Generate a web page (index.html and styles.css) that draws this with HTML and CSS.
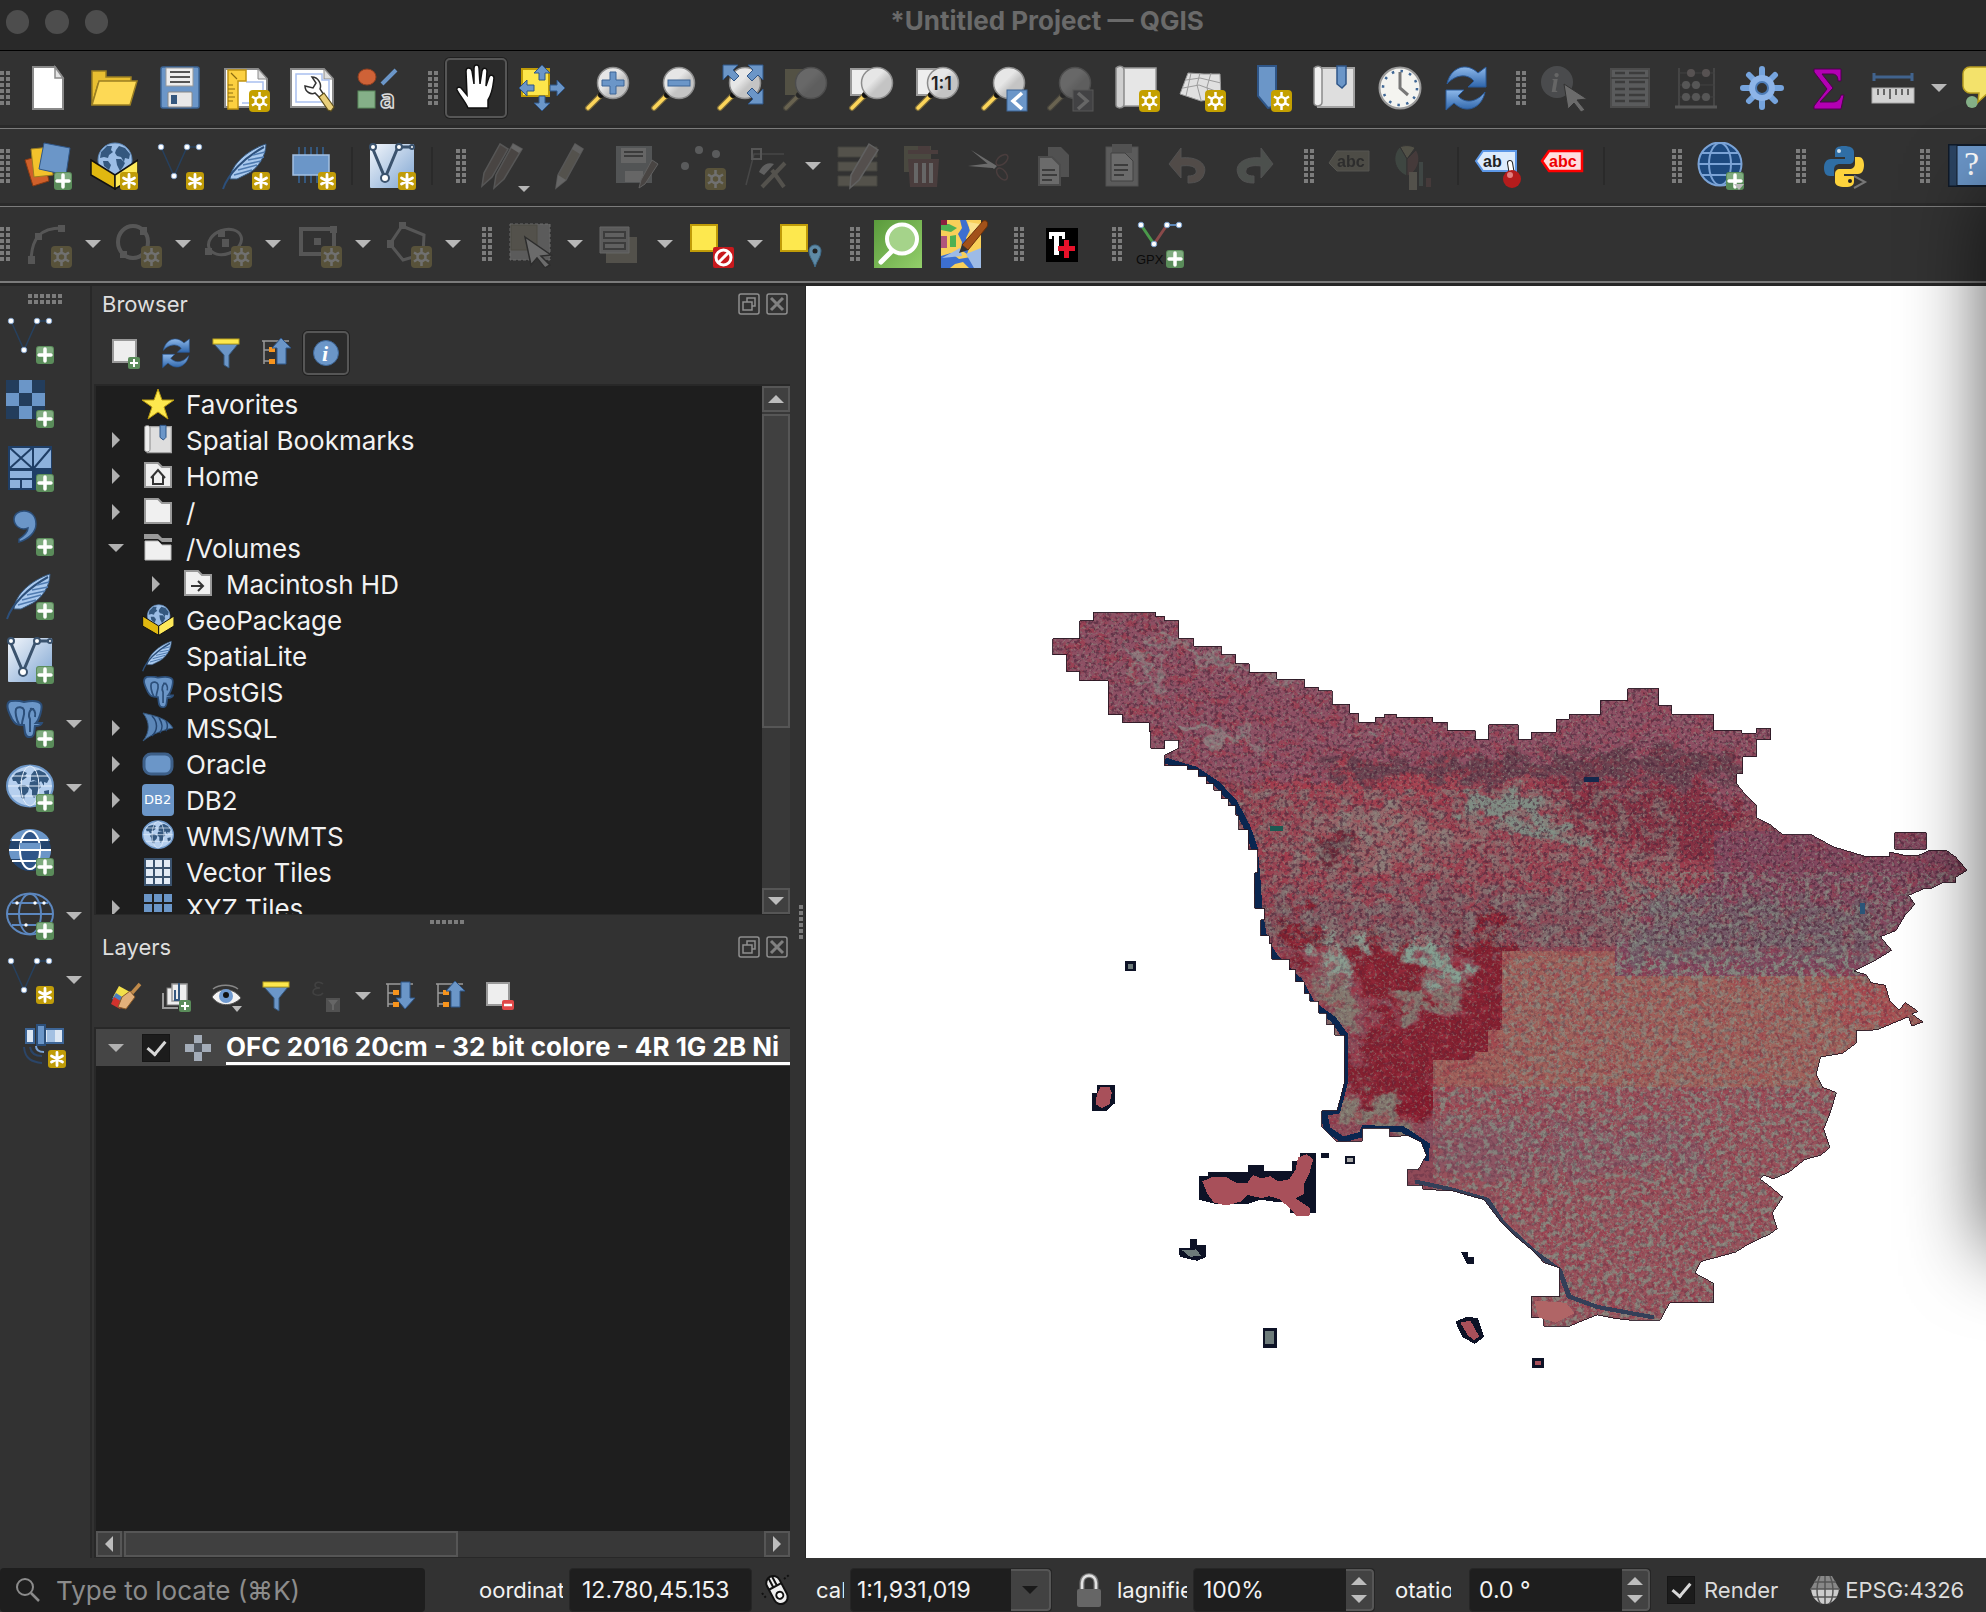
FILE: index.html
```html
<!DOCTYPE html>
<html lang="en">
    <head>
        <meta charset="utf-8" />
        <title>*Untitled Project — QGIS</title>
        <link rel="stylesheet" href="styles.css">
    </head>

    <body>

<svg class="paints" width="0" height="0" aria-hidden="true">
    <linearGradient id="glass" x1="0" y1="0" x2="1" y2="1"><stop offset="0.4" stop-color="#e6e6e6"/><stop offset="0.6" stop-color="#c4c4c4"/></linearGradient>
    <linearGradient id="sky" x1="0" y1="0" x2="1" y2="1"><stop offset="0" stop-color="#f2f6fb"/><stop offset="1" stop-color="#7fa5d2"/></linearGradient>
    <linearGradient id="blue" x1="0" y1="0" x2="0" y2="1"><stop offset="0" stop-color="#8db8ea"/><stop offset="1" stop-color="#2f66ab"/></linearGradient>
    <linearGradient id="green" x1="0" y1="0" x2="1" y2="1"><stop offset="0" stop-color="#5a9a3c"/><stop offset="1" stop-color="#93cf6a"/></linearGradient>
</svg>

<!-- icons -->
<svg class="sprite" aria-hidden="true">
    <symbol id="b-sun" viewBox="0 0 48 48"><rect x="27" y="26" width="21" height="22" rx="4" fill="#c4a000"/><path d="M37.500 28v18M30 32.500l15 9M45 32.500l-15 9" stroke="#fff" stroke-width="2.500"/><circle cx="37.500" cy="37" r="4" fill="#c4a000" stroke="#fff" stroke-width="2.500"/></symbol>
    <symbol id="b-star" viewBox="0 0 48 48"><rect x="30" y="30" width="18" height="18" rx="3" fill="#c09c08"/><path d="M39 32.500v13M33.500 36l11 6M44.500 36l-11 6" stroke="#fff" stroke-width="2.800" stroke-linecap="round"/></symbol>
    <symbol id="b-plus" viewBox="0 0 48 48"><rect x="30" y="30" width="18" height="18" rx="3" fill="#5a8c5a"/><rect x="31" y="31" width="16" height="7" rx="2" fill="#7fab7f"/><path d="M39 33v12M33 39h12" stroke="#fff" stroke-width="3.500" stroke-linecap="round"/></symbol>
    <symbol id="mag" viewBox="0 0 48 48"><path d="M4 44 17 31" stroke="#7a6a3a" stroke-width="6" stroke-linecap="round"/><path d="M4 44 15 33" stroke="#fcd55a" stroke-width="3.500" stroke-linecap="round"/><circle cx="17" cy="31" r="3" fill="#111"/><circle cx="29" cy="19" r="15.500" fill="url(#glass)" stroke="#8c8c8c" stroke-width="1.500"/></symbol>
    <symbol id="globe" viewBox="0 0 48 48"><ellipse cx="24" cy="22" rx="23" ry="20.500" fill="#b5cfee" stroke="#6d97c8" stroke-width="2"/><path d="M6 14l4-5 7-2 4 2-2 3 2 1-4 3-3 1 1 3-3 0-2-3-3 0zM14 21l5 0 4 3-1 4-3 3-1 5-3-3-1-6-2-3zM25 11l3-4 5-1 6 3 4 6-2 4-3-1 0 4-3-5-3 3-2-3-3-1-2 1zM24 18l5-1 4 2 2 4-3 3-1 5-3 3-2-3 0-5-3-3zM38 27l5-1 0 4-4 3z" fill="#34587f"/><path d="M2 22h44M6 12h36M6 32h36" stroke="#e4eefa" stroke-width="1" fill="none"/><ellipse cx="24" cy="22" rx="9" ry="20" fill="none" stroke="#e4eefa"/></symbol>

    <symbol id="i-new" viewBox="0 0 48 48"><path d="M9 3h22l8 11v31H9z" fill="#fff" stroke="#8a8a8a" stroke-width="2"/><path d="M31 3v11h8z" fill="#e4e4e4" stroke="#8a8a8a" stroke-width="1.500"/></symbol>
    <symbol id="i-open" viewBox="0 0 48 48"><path d="M2 7h14v6h25v7H8L2 41z" fill="#e9bf31" stroke="#9b7f22" stroke-width="1.500"/><path d="M9 17h38l-7 24H2z" fill="#fdd955" stroke="#9b7f22" stroke-width="1.500"/></symbol>
    <symbol id="i-save" viewBox="0 0 48 48"><rect x="5" y="3" width="38" height="41" rx="2" fill="#6b96c8" stroke="#3d6596" stroke-width="1.500"/><rect x="10" y="4" width="27" height="18" fill="#eee" stroke="#999"/><path d="M14 8h20M14 13h20M14 18h20" stroke="#555" stroke-width="2"/><rect x="12" y="28" width="24" height="15" rx="1" fill="#e8e8e8" stroke="#888"/><rect x="15" y="31" width="6" height="9" fill="#35587f"/></symbol>
    <symbol id="i-layout" viewBox="0 0 48 48"><path d="M3 5h33l9 10v28H3z" fill="#fff" stroke="#8a8a8a" stroke-width="2"/><path d="M36 5v10h9z" fill="#ddd" stroke="#8a8a8a"/><path d="M24 18h17v21H20" fill="none" stroke="#a9c0ef" stroke-width="1.500"/><path d="M6 6h18v11h-8v28H6z" fill="#fcd040" stroke="#c09412" stroke-width="1.500"/><path d="M6 21h5M6 25h7M6 29h5M6 33h7M6 37h5M9 9l6 6" stroke="#8b6c10" stroke-width="1.200"/><use href="#b-sun"/></symbol>
    <symbol id="i-manager" viewBox="0 0 48 48"><path d="M3 5h33l9 10v28H3z" fill="#fff" stroke="#8a8a8a" stroke-width="2"/><path d="M36 5v10h9z" fill="#ddd" stroke="#8a8a8a"/><path d="M8 10h26v6h7v22H8z" fill="none" stroke="#a9c0ef" stroke-width="1.500"/><path d="M17 22c0 6 6 9 10 7l5 5 4-3-4-6c2-5-2-12-8-12l4 6-3 5z" fill="#fff" stroke="#333" stroke-width="1.500"/><path d="M31 33l5-4 10 14-3 4-3-1z" fill="#e9cf7a" stroke="#5d4f1d" stroke-width="1.200"/></symbol>
    <symbol id="i-style" viewBox="0 0 48 48"><ellipse cx="13" cy="13" rx="9" ry="8" fill="#cf6237" stroke="#8f3f20"/><path d="M28 20 42 6" stroke="#6b96c8" stroke-width="4"/><rect x="4" y="27" width="17" height="17" fill="#85b088" stroke="#5b8a5d"/><text x="26" y="44" class="t-a">a</text></symbol>
    <symbol id="i-hand" viewBox="0 0 48 48"><path d="M16 44c-3-7-8-12-11-18-1-3 3-4 5-1l5 6L14 7c0-4 5-4 6 0l2 13 0-16c0-4 5-4 5 0l1 16 2-13c1-4 5-3 5 0l-1 15 3-9c1-3 5-2 5 1-1 7-1 14-6 22l0 8z" fill="#fff" stroke="#111" stroke-width="1.500"/></symbol>
    <symbol id="i-pansel" viewBox="0 0 48 48"><rect x="4" y="5" width="27" height="27" fill="#fde64b" stroke="#c09c08" stroke-width="2"/><g fill="#6b96c8" stroke="#2f5688"><path d="M24 1l8 8h-5v7h-6V9h-5zM24 47l-8-8h5v-7h6v7h5zM1 24l8-8v5h7v6H9v5zM47 24l-8-8v5h-7v6h7v5z"/></g></symbol>
    <symbol id="i-zoomin" viewBox="0 0 48 48"><use href="#mag"/><path d="M26 8h6v8h8v6h-8v8h-6v-8h-8v-6h8z" fill="#6b96c8" stroke="#3d6596"/></symbol>
    <symbol id="i-zoomout" viewBox="0 0 48 48"><use href="#mag"/><rect x="18" y="16" width="22" height="6" fill="#6b96c8" stroke="#3d6596"/></symbol>
    <symbol id="i-zoomfull" viewBox="0 0 48 48"><use href="#mag"/><g fill="#6b96c8" stroke="#2f5688"><path d="M7 1h15l-5 5 6 6-5 5-6-6-5 5zM47 1v15l-5-5-6 6-5-5 6-6-5-5zM47 40H32l5-5-6-6 5-5 6 6 5-5z"/></g></symbol>
    <symbol id="i-zoomsel" viewBox="0 0 48 48"><rect x="3" y="5" width="22" height="26" fill="#a89a48"/><use href="#mag"/></symbol>
    <symbol id="i-zoomlayer" viewBox="0 0 48 48"><rect x="3" y="5" width="22" height="26" fill="#eee" stroke="#999" stroke-width="2"/><use href="#mag"/></symbol>
    <symbol id="i-zoomnative" viewBox="0 0 48 48"><rect x="3" y="5" width="22" height="26" fill="#eee" stroke="#999" stroke-width="2"/><use href="#mag"/><text x="17" y="26" class="t-11">1:1</text></symbol>
    <symbol id="i-zoomlast" viewBox="0 0 48 48"><use href="#mag"/><rect x="27" y="26" width="20" height="21" fill="#6b96c8" stroke="#3d6596"/><path d="M42 29l-9 8 9 8" fill="none" stroke="#fff" stroke-width="3.500"/></symbol>
    <symbol id="i-zoomnext" viewBox="0 0 48 48"><use href="#mag"/><rect x="27" y="26" width="20" height="21" fill="#667" stroke="#aaa"/><path d="M32 29l9 8-9 8" fill="none" stroke="#ddd" stroke-width="3.500"/></symbol>
    <symbol id="i-mapview" viewBox="0 0 48 48"><path d="M8 4h36v38H8z" fill="#e6e6e6" stroke="#999" stroke-width="1.500"/><path d="M4 4c3-3 8-2 8 2v34c0 5-8 5-8 1z" fill="#cfcfcf" stroke="#8a8a8a" stroke-width="1.500"/><use href="#b-sun"/></symbol>
    <symbol id="i-3d" viewBox="0 0 48 48"><path d="M10 9l16 1 16 0 1 24-20 3L2 30z" fill="#e0e0e0" stroke="#999"/><path d="M8 16l14-2 21 5M5 24l16-3 22 8M22 9l-3 12 4 15M33 9l-4 14 2 12M13 9l-3 14-2 9" stroke="#9c9c9c" fill="none"/><use href="#b-sun"/></symbol>
    <symbol id="i-bookmarknew" viewBox="0 0 48 48"><path d="M14 2h18v40l-8 2-10-12z" fill="#6b96c8" stroke="#2f5688" stroke-width="2"/><use href="#b-sun"/></symbol>
    <symbol id="i-bookmarks" viewBox="0 0 48 48"><path d="M8 4h36v39H8z" fill="#dedede" stroke="#a2a2a2" stroke-width="2"/><path d="M4 4c3-3 8-2 8 2v32c0 5-8 5-8 1z" fill="#efefef" stroke="#8a8a8a" stroke-width="1.500"/><path d="M27 2h9v18l-4 4-5-4z" fill="#6b96c8" stroke="#2f5688" stroke-width="1.500"/></symbol>
    <symbol id="i-clock" viewBox="0 0 48 48"><circle cx="24" cy="24" r="20.500" fill="#f4f4f0" stroke="#9a9a9a" stroke-width="2"/><circle cx="24" cy="24" r="17" fill="none" stroke="#3f6796" stroke-width="2.500" stroke-dasharray="2.500 6.400"/><path d="M24 8v16l8 7" fill="none" stroke="#777" stroke-width="3"/></symbol>
    <symbol id="i-refresh" viewBox="0 0 48 48"><path d="M5 20C8 4 24-3 36 9l8-6v20H26l6-6C24 8 12 12 5 20z" fill="url(#blue)" stroke="#2a5a99"/><path d="M43 28C40 44 24 51 12 39l-8 7V26h18l-6 6c8 9 20 5 27-4z" fill="url(#blue)" stroke="#2a5a99"/></symbol>

    <symbol id="i-identify" viewBox="0 0 48 48"><circle cx="17" cy="18" r="16" fill="#7d8791"/><text x="11" y="28" class="t-i">i</text><path d="M24 20l23 15-10 1 8 10-4 2-7-9-6 6z" fill="#eee" stroke="#333"/></symbol>
    <symbol id="i-table" viewBox="0 0 48 48"><rect x="5" y="5" width="38" height="38" fill="#b5babf" stroke="#888" stroke-width="2"/><path d="M9 9h10M23 9h16M9 18h10M23 18h16M9 25h10M23 25h16M9 31h10M23 31h16M9 37h10M23 37h16" stroke="#555" stroke-width="2.500"/><path d="M5 14h38" stroke="#666" stroke-width="2"/></symbol>
    <symbol id="i-abacus" viewBox="0 0 48 48"><path d="M7 4v39M42 4v39" stroke="#888" stroke-width="1.500"/><path d="M3 43h42" stroke="#aaa" stroke-width="3"/><path d="M7 9h36M7 21h36M7 33h36" stroke="#666"/><g fill="#b99"><circle cx="19" cy="9" r="4"/><circle cx="34" cy="9" r="4"/></g><g fill="#ababab"><circle cx="14" cy="21" r="4"/><circle cx="24" cy="21" r="4"/><circle cx="14" cy="33" r="4"/><circle cx="24" cy="33" r="4"/><circle cx="34" cy="33" r="4"/></g></symbol>
    <symbol id="i-gear" viewBox="0 0 48 48"><g stroke="#76a4dd" stroke-width="6" stroke-linecap="round"><path d="M24 5v38M5 24h38M11 11l26 26M37 11 11 37"/></g><circle cx="24" cy="24" r="13" fill="#8db4e8"/><circle cx="24" cy="24" r="6" fill="#323232" stroke="#4d7bb5" stroke-width="2"/></symbol>
    <symbol id="i-sum" viewBox="0 0 48 48"><path d="M10 5h27v12h-3c0-5-2-7-6-7H18l11 14-13 14h13c5 0 7-3 8-7h3l-3 14H10v-3l13-17L10 8z" fill="#b300b3" stroke="#4d004d"/></symbol>
    <symbol id="i-measure" viewBox="0 0 48 48"><path d="M4 13h38M4 9v8M42 9v8" stroke="#41638d" stroke-width="3" fill="none"/><rect x="2" y="24" width="42" height="15" fill="#d3d3d3" stroke="#aaa"/><path d="M8 25v6M14 25v6M20 25v10M26 25v6M32 25v6M38 25v6" stroke="#444" stroke-width="1.500"/></symbol>
    <symbol id="i-tip" viewBox="0 0 48 48"><circle cx="12" cy="38" r="6" fill="#85b088"/><path d="M10 3h34v26H28l-10 9 1-9h-9c-3 0-7-3-7-7V10c0-4 3-7 7-7z" fill="#f3e26b" stroke="#b89d20" stroke-width="1.500"/></symbol>

    <symbol id="i-datasource" viewBox="0 0 48 48"><path d="M1 18l18-5 6 26-16 5z" fill="#d0602a" stroke="#8a3a12"/><path d="M7 7l20-2 2 28-19 2z" fill="#f3c22c" stroke="#9b7f22"/><path d="M20 1l26 5-4 27-27-6z" fill="#6b96c8" stroke="#2f5688"/><use href="#b-plus"/></symbol>
    <symbol id="i-gpkg" viewBox="0 0 48 48"><circle cx="25" cy="18" r="17" fill="#9bbde5" stroke="#5c87b8"/><path d="M11 10l6-6 5 0-1 4 2 2-4 3-1 3-4-1-4 1zM13 19l5 0 3 4-2 5-5-4zM26 8l3-4 6 2 5 6-1 5-4-1-1 4-3-5-4-1-2-3zM26 17l5 0 4 4-2 4-3 4-3-6z" fill="#34587f"/><path d="M1 18l24 15v14L1 33z" fill="#e0b810" stroke="#111" stroke-width="1.500"/><path d="M48 18 25 33v14l23-14z" fill="#fde95a" stroke="#111" stroke-width="1.500"/></symbol>
    <symbol id="i-gpkgnew" viewBox="0 0 48 48"><use href="#i-gpkg"/><use href="#b-star"/></symbol>
    <symbol id="vee" viewBox="0 0 48 48"><path d="M5 5l13 29L31 5h12" fill="none" stroke="#26405e" stroke-width="1.500"/><g fill="#fff" stroke="#7ba0cc" stroke-width=".8"><circle cx="5" cy="5" r="2.800"/><circle cx="18" cy="34" r="2.800"/><circle cx="31" cy="5" r="2.800"/><circle cx="43" cy="5" r="2.800"/></g></symbol>
    <symbol id="i-shp" viewBox="0 0 48 48"><use href="#vee"/><use href="#b-star"/></symbol>
    <symbol id="i-vecadd" viewBox="0 0 48 48"><use href="#vee"/><use href="#b-plus"/></symbol>
    <symbol id="feather" viewBox="0 0 48 48"><path d="M8 37C9 22 26 8 44 2c0 12-8 24-17 29l-12 6z" fill="#a9c9ee" stroke="#35587f"/><path d="M1 47C6 32 22 16 42 5" fill="none" stroke="#2c4f7a" stroke-width="2"/><path d="M12 33l18-5M16 28l19-5M21 23l18-4M26 18l16-3M31 13l12-3" stroke="#4f7bb0" stroke-width="1.500"/></symbol>
    <symbol id="i-splnew" viewBox="0 0 48 48"><use href="#feather"/><use href="#b-star"/></symbol>
    <symbol id="i-spladd" viewBox="0 0 48 48"><use href="#feather"/><use href="#b-plus"/></symbol>
    <symbol id="i-memory" viewBox="0 0 48 48"><path d="M11 5v36M17 5v36M23 5v36M29 5v36M35 5v36" stroke="#34587f" stroke-width="2"/><rect x="5" y="13" width="36" height="20" fill="#6b96c8" stroke="#a3c0e2" stroke-width="1.500"/></symbol>
    <symbol id="i-memnew" viewBox="0 0 48 48"><use href="#i-memory"/><use href="#b-star"/></symbol>
    <symbol id="mesh" viewBox="0 0 48 48"><rect x="2" y="2" width="44" height="44" rx="1" fill="url(#sky)"/><path d="M4 5l13 31L30 5h14" fill="none" stroke="#3b536e" stroke-width="3"/><g fill="#fff" stroke="#3b536e" stroke-width="2"><circle cx="5" cy="5" r="3"/><circle cx="17" cy="36" r="4"/><circle cx="31" cy="5" r="3"/><circle cx="44" cy="5" r="2"/></g></symbol>
    <symbol id="i-virtnew" viewBox="0 0 48 48"><use href="#mesh"/><use href="#b-star"/></symbol>
    <symbol id="i-virtadd" viewBox="0 0 48 48"><use href="#mesh"/><use href="#b-plus"/></symbol>
    <symbol id="pencil" viewBox="0 0 48 48"><path d="M29 2l8 5-17 31-10 8 2-13z" fill="#a89c7c" stroke="#aaa" stroke-width="1.500"/><path d="M29 2l8 5-3 5-8-5z" fill="#ccc"/><path d="M12 33l8 5-10 8z" fill="#ddd"/></symbol>
    <symbol id="i-pencils" viewBox="0 0 48 48"><path d="M20 2l8 5-16 28-10 9 2-13z" fill="#8c6f60" stroke="#aaa" stroke-width="1.500"/><path d="M33 2l9 5-18 30-10 9 2-13z" fill="#8c6f60" stroke="#aaa" stroke-width="1.500"/><path d="M33 2l9 5-3 4-8-5z" fill="#ddd"/></symbol>
    <symbol id="i-saveedit" viewBox="0 0 48 48"><rect x="4" y="4" width="36" height="37" fill="#9aa3ad"/><rect x="9" y="6" width="25" height="15" fill="#ddd"/><path d="M12 10h19M12 14h19" stroke="#555" stroke-width="2"/><rect x="13" y="29" width="18" height="11" fill="#ddd"/><path d="M40 18l6 4-13 20-6 4 2-8z" fill="#8c6f60" stroke="#ccc"/></symbol>
    <symbol id="i-points" viewBox="0 0 48 48"><g fill="#b5babf"><circle cx="21" cy="8" r="4"/><circle cx="38" cy="12" r="4"/><circle cx="7" cy="24" r="4"/></g><use href="#b-sun"/></symbol>
    <symbol id="i-vertex" viewBox="0 0 48 48"><path d="M2 43l8-31h30" stroke="#777" stroke-width="1.500" fill="none"/><rect x="8" y="7" width="9" height="10" fill="none" stroke="#aaa" stroke-width="2"/><path d="M41 21 18 45M28 28l12 17" stroke="#a89c7c" stroke-width="4"/><path d="M15 30c4-8 9-10 15-8l-10 11z" fill="#ccc"/></symbol>
    <symbol id="i-modify" viewBox="0 0 48 48"><path d="M4 5h39v10H4zM4 20h39v9H4zM4 34h39v10H4z" fill="#a89e70" stroke="#77704e"/><path d="M35 2l9 6-19 30-9 8 1-13z" fill="#b09080" stroke="#ccc" stroke-width="1.500"/></symbol>
    <symbol id="i-trash" viewBox="0 0 48 48"><rect x="4" y="4" width="27" height="26" fill="#8a7f48"/><path d="M8 10h30M18 6h12" stroke="#a05050" stroke-width="4"/><path d="M8 17h31l-2 28H10z" fill="#a05050"/><path d="M16 21v20M24 21v20M31 21v20" stroke="#ddd" stroke-width="4"/></symbol>
    <symbol id="i-cut" viewBox="0 0 48 48"><path d="M2 24l24-3 4 3-4 2zM5 8l26 16-3 3z" fill="#eee"/><g fill="none" stroke="#a05050" stroke-width="1.500"><ellipse cx="36" cy="18" rx="7" ry="4" transform="rotate(-40 36 18)"/><ellipse cx="36" cy="32" rx="7" ry="4" transform="rotate(50 36 32)"/></g></symbol>
    <symbol id="i-copy" viewBox="0 0 48 48"><path d="M16 5h13l8 8v22H16z" fill="#999"/><path d="M7 15h13l8 8v20H7z" fill="#eee" stroke="#888" stroke-width="2"/><path d="M10 28h13M10 33h15M10 38h10" stroke="#555" stroke-width="2"/></symbol>
    <symbol id="i-paste" viewBox="0 0 48 48"><rect x="8" y="5" width="32" height="39" fill="#bbb" stroke="#999"/><rect x="14" y="2" width="20" height="9" fill="#999"/><path d="M13 11h14l8 8v20H13z" fill="#eee" stroke="#666"/><path d="M16 23h14M16 28h14M16 33h10" stroke="#555" stroke-width="2"/></symbol>
    <symbol id="i-undo" viewBox="0 0 48 48"><path d="M5 22 17 6v10c16-2 27 6 23 16-2 7-8 9-16 9v-7c7 0 9-3 8-6-1-4-7-5-15-4v12z" fill="#a98270" stroke="#999"/></symbol>
    <symbol id="i-redo" viewBox="0 0 48 48"><path d="M43 22 31 6v10C15 14 4 22 8 32c2 7 8 9 16 9v-7c-7 0-9-3-8-6 1-4 7-5 15-4v12z" fill="#809889" stroke="#999"/></symbol>
    <symbol id="i-label" viewBox="0 0 48 48"><path d="M1 21 9 9h32v20H9z" fill="#8f8a62" stroke="#aaa58a"/><text x="9" y="25" class="t-abc">abc</text></symbol>
    <symbol id="i-diagram" viewBox="0 0 48 48"><g stroke="#333"><path d="M13 17 6 5C10 3 18 3 21 6z" fill="#a59a58"/><path d="M13 17 6 5c-9 8-6 24 7 29z" fill="#4b7a5d"/><path d="M13 17l9-9c6 8 2 22-9 26z" fill="#8c4848"/></g><path d="M15 30h8v18h-8z" fill="#a59a70"/><path d="M25 20h4v24h-4z" fill="#4b7a6d"/><path d="M32 36h5v9h-5z" fill="#8c4848"/></symbol>
    <symbol id="i-pin" viewBox="0 0 48 48"><path d="M2 19 9 9h33v20H9z" fill="#dcebfc" stroke="#5c97e6" stroke-width="2"/><text x="9" y="25" class="t-abc">ab</text><path d="M36 21l2 12" stroke="#222" stroke-width="6" stroke-linecap="round"/><path d="M36 21l2 12" stroke="#fff" stroke-width="4" stroke-linecap="round"/><circle cx="38" cy="37" r="9" fill="#b41c1c"/><circle cx="36" cy="33" r="3" fill="#e38080"/></symbol>
    <symbol id="i-redlabel" viewBox="0 0 48 48"><path d="M2 19 9 9h33v20H9z" fill="#ffdede" stroke="#f00" stroke-width="2.500"/><text x="9" y="25" class="t-red">abc</text></symbol>
    <symbol id="i-wwwadd" viewBox="0 0 48 48"><g fill="none" stroke="#7ba3d6" stroke-width="2"><circle cx="24" cy="22" r="21.500" fill="#1d4a80"/><ellipse cx="24" cy="22" rx="11" ry="21"/><path d="M2 22h44M6 11h36M6 33h36"/></g><use href="#b-plus"/><path d="M38 42h10l-5 6z" fill="#bbb"/></symbol>
    <symbol id="i-python" viewBox="0 0 48 48"><path d="M24 4c-7 0-9 2-9 6v5h10v2H11c-5 0-7 4-7 9s2 8 6 8h4v-6c0-4 2-6 6-6h9c3 0 5-2 5-5v-7c0-4-4-6-10-6z" fill="#2f6ea5"/><path d="M25 45c7 0 9-2 9-6v-5H24v-2h14c4 0 6-4 6-9s-2-8-5-8h-4v6c0 4-2 6-6 6h-9c-3 0-5 2-5 5v8c0 3 4 5 10 5z" fill="#fdd33c"/><circle cx="19" cy="9" r="2" fill="#cfe0ee"/><circle cx="30" cy="39" r="2" fill="#222"/><path d="M34 34l11 6-11 6" fill="none" stroke="#777" stroke-width="2"/></symbol>
    <symbol id="i-help" viewBox="0 0 48 48"><rect x="5" y="3" width="50" height="41" fill="#6b96c8" stroke="#111b29" stroke-width="2"/><rect x="5" y="3" width="8" height="41" fill="#2a4361" stroke="#111b29"/><text x="20" y="33" class="t-q">?</text></symbol>

    <symbol id="i-curve" viewBox="0 0 48 48"><path d="M7 40C8 18 16 8 38 8" fill="none" stroke="#aaa" stroke-width="3"/><path d="M4 36h7v8H4zM11 13h7v7h-7zM34 5h7v7h-7z" fill="#aaa"/><use href="#b-sun"/></symbol>
    <symbol id="i-circle" viewBox="0 0 48 48"><ellipse cx="19" cy="22" rx="15" ry="16" fill="none" stroke="#aaa" stroke-width="4"/><path d="M26 7h7v8h-7zM6 31h7v7H6z" fill="#aaa"/><use href="#b-sun"/></symbol>
    <symbol id="i-ellipse" viewBox="0 0 48 48"><ellipse cx="21" cy="22" rx="17" ry="12" transform="rotate(-20 21 22)" fill="none" stroke="#aaa" stroke-width="3"/><path d="M1 28h7v7H1zM14 10h7v7h-7zM18 19h7v8h-7z" fill="#aaa"/><use href="#b-sun"/></symbol>
    <symbol id="i-rect" viewBox="0 0 48 48"><path d="M7 9h33v25H7z" fill="none" stroke="#aaa" stroke-width="4"/><path d="M36 6h7v7h-7zM20 18h7v7h-7z" fill="#aaa"/><use href="#b-sun"/></symbol>
    <symbol id="i-polygon" viewBox="0 0 48 48"><path d="M18 6l22 9-1 19-20 6L6 24z" fill="none" stroke="#aaa" stroke-width="3"/><path d="M15 2h7v7h-7zM3 20h7v8H3z" fill="#aaa"/><use href="#b-sun"/></symbol>
    <symbol id="i-select" viewBox="0 0 48 48"><rect x="4" y="4" width="40" height="36" fill="#bbb" stroke="#eee" stroke-dasharray="3 2"/><rect x="5" y="5" width="26" height="25" fill="#a59a70" stroke="#8a7f50"/><path d="M19 17l26 18-10 1 9 9-5 3-8-10-6 7z" fill="#eee" stroke="#222" stroke-width="1.500"/></symbol>
    <symbol id="i-selvalue" viewBox="0 0 48 48"><path d="M10 17h31v26H10z" fill="#a59a70"/><path d="M4 7h29v26H4z" fill="#bbb" stroke="#ddd"/><path d="M8 12h21v6H8zM8 23h21v6H8z" fill="#ccc" stroke="#555" stroke-width="2"/></symbol>
    <symbol id="i-deselect" viewBox="0 0 48 48"><rect x="5" y="5" width="26" height="26" fill="#fde84e" stroke="#c09c08" stroke-width="2"/><rect x="27" y="27" width="21" height="21" rx="2" fill="#c8191d"/><circle cx="37.500" cy="37.500" r="7.500" fill="none" stroke="#fff" stroke-width="3"/><path d="M32 43l11-11" stroke="#fff" stroke-width="3"/></symbol>
    <symbol id="i-selloc" viewBox="0 0 48 48"><rect x="5" y="5" width="26" height="26" fill="#fde84e" stroke="#c09c08" stroke-width="2"/><path d="M39 47c-2-7-6-10-6-16 0-8 12-8 12 0 0 6-4 9-6 16z" fill="#5e8aa6" stroke="#3f6a88"/><circle cx="39" cy="31" r="2.500" fill="#222"/></symbol>
    <symbol id="i-search" viewBox="0 0 48 48"><rect width="48" height="48" fill="url(#green)"/><path d="M17 32 7 42" stroke="#fff" stroke-width="5" stroke-linecap="round"/><ellipse cx="28" cy="19" rx="15" ry="14.500" fill="#a5d38a" stroke="#fff" stroke-width="4"/></symbol>
    <symbol id="i-osm" viewBox="0 0 48 48"><rect x="1" width="40" height="48" fill="#f8cf59"/><path d="M20 0h6l4 10-4 8 4 8-3 8-6-4 1-8-4-8 4-6zM1 36l10-3 8 6 12-2 4 11h-6l-6-6-8 2-5 4H1z" fill="#3c6fd0"/><path d="M1 4h8l8 4-6 4-10-2z" fill="#4eb052"/><path d="M1 0h6v5H1z" fill="#8a2040"/><path d="M1 16h6v12H1z" fill="#b0547c"/><path d="M10 16l6-1v12h-6z" fill="#4eb052"/><path d="M28 2l12 2v8l-8 8z" fill="#fbe28c"/><path d="M2 38l18-10 2 8M26 34l8 14h7V28z" fill="#9dbbe6"/><path d="M43 1c5-2 6 4 3 7L28 30l-6-5z" fill="#a2521a" stroke="#6b3109"/><path d="M22 25l6 5-9 3z" fill="#333"/></symbol>
    <symbol id="i-tplus" viewBox="0 0 48 48"><rect x="8" y="8" width="32" height="34" fill="#000"/><path d="M11 12h16v7h-3v-3h-3v19h-5V16h-2v3h-3z" fill="#fff"/><path d="M26 20h5v6h6v5h-6v7h-5v-7h-6v-5h6z" fill="#e8112a"/></symbol>
    <symbol id="i-gpx" viewBox="0 0 48 48"><path d="M5 5l13 19" stroke="#4b9a4b" stroke-width="3"/><path d="M18 24 31 5" stroke="#8a4a4a" stroke-width="3"/><path d="M31 5h12" stroke="#5c87b8" stroke-width="2"/><g fill="#fff" stroke="#7ba0cc"><circle cx="5" cy="5" r="2.800"/><circle cx="18" cy="24" r="2.800"/><circle cx="31" cy="5" r="2.800"/><circle cx="43" cy="5" r="2.800"/></g><text x="0" y="44" class="t-gpx">GPX</text><use href="#b-plus"/></symbol>

    <symbol id="i-raster" viewBox="0 0 48 48"><rect y="0" width="39" height="39" fill="#233d5c"/><path d="M13 0h13v13H13zM0 13h13v13H0zM26 13h13v13H26zM13 26h13v13H13z" fill="#6b96c8"/><use href="#b-plus"/></symbol>
    <symbol id="i-meshadd" viewBox="0 0 48 48"><rect x="2" y="2" width="44" height="44" fill="#1f3e66"/><path d="M4 4h22v20H4zM28 4h17v20H28zM4 27h22v7H4zM4 36h10v8H4zM16 36h10v8H16z" fill="#8db1dc"/><path d="M4 4l22 20M26 4 4 24M45 4 28 24" stroke="#1f3e66" stroke-width="2"/><use href="#b-plus"/></symbol>
    <symbol id="i-comma" viewBox="0 0 48 48"><path d="M18 3c8 0 12 6 12 13 0 8-7 15-17 18v-3c6-4 9-8 9-11-7 3-14-2-14-9 0-5 5-8 10-8z" fill="#6b96c8" stroke="#2c4f7a" stroke-width="1.500"/><use href="#b-plus"/></symbol>
    <symbol id="elephant" viewBox="0 0 48 48"><path d="M5 1c7-1 10 0 13 1 5-1 14-2 17 2 2 4-2 16-5 19l6 0c-1 3-4 3-7 3-1 5 0 12-6 11-5 0-4-7-5-12-8 0-9-1-12-6C3 13-2 3 5 1z" fill="#6b96c8" stroke="#2c4f7a" stroke-width="2"/><path d="M13 24c-3-5-4-12-3-15 2-3 7-2 8 1 1 6-2 9-2 14M24 9c4-1 6 3 5 8M28 9c-5-1-6 7-4 10v13" fill="none" stroke="#2c4f7a" stroke-width="2"/></symbol>
    <symbol id="i-pgadd" viewBox="0 0 48 48"><use href="#elephant"/><use href="#b-plus"/></symbol>
    <symbol id="i-wmsadd" viewBox="0 0 48 48"><use href="#globe"/><use href="#b-plus"/></symbol>
    <symbol id="i-wcsadd" viewBox="0 0 48 48"><circle cx="24" cy="22" r="21" fill="#24456f"/><path d="M4 13C10-3 38-3 44 13zM3 22h42c0 4-1 6-2 9H5c-1-3-2-5-2-9z" fill="#6b96c8"/><ellipse cx="24" cy="22" rx="10" ry="19" fill="#2f5588" stroke="#fff" stroke-width="2"/><path d="M14 15h20v7H14z" fill="#6b96c8"/><path d="M3 22h42M6 12h36M6 33h36" stroke="#fff" stroke-width="2"/><use href="#b-plus"/></symbol>
    <symbol id="i-wfsadd" viewBox="0 0 48 48"><g fill="none" stroke="#5c87bf" stroke-width="2"><ellipse cx="24" cy="22" rx="23" ry="20.500"/><ellipse cx="24" cy="22" rx="11" ry="20"/><path d="M2 22h44M6 11h36M6 33h36"/></g><g fill="#fff"><circle cx="11" cy="11" r="1.700"/><circle cx="29" cy="11" r="1.700"/><circle cx="38" cy="11" r="1.700"/><circle cx="20" cy="33" r="1.700"/></g><use href="#b-plus"/></symbol>
    <symbol id="i-gps" viewBox="0 0 48 48"><path d="M8 9h8v14H8zM26 9h19v14H26z" fill="#dde7f3" stroke="#3d6596" stroke-width="2"/><path d="M31 10v12M35 10v12" stroke="#a3c0e2" stroke-width="4"/><path d="M19 5h8v20h-8z" fill="#6b96c8" stroke="#2c4f7a" stroke-width="2"/><path d="M12 27c1 6 5 9 12 9M6 27c1 12 8 15 18 16" fill="none" stroke="#2b4568" stroke-width="2"/><path d="M18 26c0 4 3 6 8 6" fill="none" stroke="#7ba3d6" stroke-width="2"/><use href="#b-star"/></symbol>

    <!-- 32px panel icons -->
    <symbol id="p-add" viewBox="0 0 32 32"><rect x="3" y="3" width="23" height="22" fill="#eee" stroke="#999" stroke-width="2"/><rect x="18" y="20" width="12" height="12" rx="2" fill="#5a8c5a"/><path d="M24 22v8M20 26h8" stroke="#fff" stroke-width="2"/></symbol>
    <symbol id="p-remove" viewBox="0 0 32 32"><rect x="3" y="3" width="22" height="22" fill="#eee" stroke="#999" stroke-width="2"/><rect x="18" y="20" width="12" height="10" rx="2" fill="#e04848"/><path d="M20 25h8" stroke="#fff" stroke-width="2.500"/></symbol>
    <symbol id="p-filter" viewBox="0 0 32 32"><path d="M4 7h24l-9 11v13l-5-3V18z" fill="#6b96c8" stroke="#35587f"/><rect x="3" y="2" width="26" height="5" fill="#fde84e" stroke="#b9a11e"/></symbol>
    <symbol id="p-up" viewBox="0 0 32 32"><path d="M2 4h27M4 4v23M4 13h7M4 24h7" stroke="#9a9a9a" stroke-width="1.500"/><path d="M9 10h6v5H9zM9 22h6v5H9z" fill="#f7941d"/><path d="M21 1l10 10h-5v16h-9V11h-5z" fill="#6b96c8" stroke="#2f5688"/></symbol>
    <symbol id="p-down" viewBox="0 0 32 32"><path d="M2 4h27M4 4v23M4 13h7M4 24h7" stroke="#9a9a9a" stroke-width="1.500"/><path d="M9 10h6v5H9zM9 22h6v5H9z" fill="#f7941d"/><path d="M21 29l10-11h-5V2h-9v16h-5z" fill="#6b96c8" stroke="#2f5688"/></symbol>
    <symbol id="p-info" viewBox="0 0 32 32"><circle cx="16" cy="16" r="12.500" fill="#6b96c8" stroke="#3d6596"/><text x="12" y="24" class="t-info">i</text></symbol>
    <symbol id="p-brush" viewBox="0 0 32 32"><path d="M3 17l6-11 11 6-3 10z" fill="#f2df4a"/><path d="M2 19l4-6 11 7-4 5z" fill="#4a7ec0"/><path d="M1 24l3-7 10 6-4 6z" fill="#d2322d"/><path d="M12 17l8-6 5 6-9 12-8-2z" fill="#e2b07a" stroke="#8a5a28"/><path d="M22 13l8-9" stroke="#c08a4a" stroke-width="3.500"/></symbol>
    <symbol id="p-group" viewBox="0 0 32 32"><path d="M3 13v15h15" fill="none" stroke="#999" stroke-width="2"/><rect x="7" y="8" width="17" height="17" fill="#eee" stroke="#777"/><rect x="12" y="4" width="15" height="17" fill="#eee" stroke="#999" stroke-width="1.500"/><path d="M15 10v10h4V3" fill="none" stroke="#35587f" stroke-width="2"/><rect x="19" y="20" width="12" height="12" rx="2" fill="#5a8c5a"/><path d="M25 22v8M21 26h8" stroke="#fff" stroke-width="2"/></symbol>
    <symbol id="p-eye" viewBox="0 0 32 32"><path d="M3 9C9 4 22 4 28 9" fill="none" stroke="#888" stroke-width="1.500"/><path d="M2 17C9 7 23 7 31 18 22 27 9 27 2 17z" fill="#f3f3f3" stroke="#555"/><circle cx="16" cy="16" r="7" fill="#6f9ad0"/><circle cx="16" cy="15" r="3" fill="#111"/><path d="M22 26h10l-5 6z" fill="#bbb"/></symbol>
    <symbol id="p-expr" viewBox="0 0 32 32"><path d="M13 4c-3-3-8-2-8 1 0 3 4 3 5 3-3 0-7 1-7 4s7 5 10 1" fill="none" stroke="#666" stroke-width="1.500"/><rect x="16" y="18" width="14" height="14" fill="#999"/><path d="M18 20h10l-4 5v5h-2v-5z" fill="#ddd"/></symbol>
    <symbol id="p-float" viewBox="0 0 22 22"><rect x="1" y="1" width="20" height="20" rx="2" fill="none" stroke="#8f8f8f" stroke-width="1.500"/><path d="M5 9h9v8H5zM9 9V5h8v8h-3" fill="none" stroke="#8f8f8f" stroke-width="1.500"/></symbol>
    <symbol id="p-close" viewBox="0 0 22 22"><rect x="1" y="1" width="20" height="20" rx="2" fill="none" stroke="#8f8f8f" stroke-width="1.500"/><path d="M5 5l12 12M17 5 5 17" stroke="#808080" stroke-width="3"/></symbol>

    <symbol id="t-star" viewBox="0 0 32 32"><path d="M16 1l4 11h12l-10 7 4 12-10-7-10 7 4-12L0 12h12z" fill="#fde84e" stroke="#b99a10"/></symbol>
    <symbol id="t-folder" viewBox="0 0 32 32"><path d="M3 3h13l4 4h9v20H3z" fill="#f0f0f0" stroke="#999" stroke-width="2"/></symbol>
    <symbol id="t-home" viewBox="0 0 32 32"><use href="#t-folder"/><path d="M9 18l7-8 7 8M11 16v8h10v-8" fill="none" stroke="#333" stroke-width="2"/></symbol>
    <symbol id="t-folders" viewBox="0 0 32 32"><path d="M2 2h14l4 4h10v4H20l-4-3H2z" fill="#999"/><path d="M3 9h13l4 4h9v15H3z" fill="#f0f0f0" stroke="#bbb"/></symbol>
    <symbol id="t-link" viewBox="0 0 32 32"><use href="#t-folder"/><path d="M9 18h12M16 13l5 5-5 5" fill="none" stroke="#333" stroke-width="2"/></symbol>
    <symbol id="t-mssql" viewBox="0 0 32 32"><path d="M1 1c12 3 24 5 30 15-7 1-22 6-30 13C8 20 8 10 1 1z" fill="#5c87b8" stroke="#35587f"/><path d="M10 4c6 6 6 14 0 20M17 6c4 6 4 10 1 15M24 9c2 4 2 7 0 10" fill="none" stroke="#24456f" stroke-width="1.500"/></symbol>
    <symbol id="t-oracle" viewBox="0 0 32 32"><rect x="2" y="6" width="28" height="20" rx="7" fill="#6b96c8" stroke="#3d5f88" stroke-width="3"/></symbol>
    <symbol id="t-db2" viewBox="0 0 32 32"><rect width="32" height="32" rx="4" fill="#6b96c8"/><text x="2" y="20" class="t-db2">DB2</text></symbol>
    <symbol id="t-vtiles" viewBox="0 0 32 32"><rect x="2" y="2" width="28" height="28" fill="#3b536e"/><path d="M4 4h7v7H4zM13 4h7v7h-7zM22 4h6v7h-6zM4 13h7v7H4zM13 13h7v7h-7zM22 13h6v7h-6zM4 22h7v6H4zM13 22h7v6h-7zM22 22h6v6h-6z" fill="#e3ebf5"/></symbol>
    <symbol id="t-xyz" viewBox="0 0 32 32"><path d="M2 2h8v8H2zM12 2h8v8h-8zM22 2h8v8h-8zM2 12h8v8H2zM12 12h8v8h-8zM22 12h8v8h-8zM2 22h8v8H2zM12 22h8v8h-8zM22 22h8v8h-8z" fill="#6b96c8"/></symbol>
    <symbol id="t-raster" viewBox="0 0 32 32"><path d="M12 3h8v8h-8zM3 12h9v8H3zM20 12h9v8h-9zM12 20h8v9h-8z" fill="#a3acb8"/><path d="M12 11h8v9h-8z" fill="#50565e"/></symbol>
</svg>

<header class="titlebar">
    <div class="lights"><span></span><span></span><span></span></div>
    <h1>*Untitled Project — QGIS</h1>
</header>

<div class="toolrow">
    <div class="grip first"></div>
    <button class="tool" aria-label="New Project"><svg><use href="#i-new"/></svg></button>
    <button class="tool" aria-label="Open Project"><svg><use href="#i-open"/></svg></button>
    <button class="tool" aria-label="Save Project"><svg><use href="#i-save"/></svg></button>
    <button class="tool" aria-label="New Print Layout"><svg><use href="#i-layout"/></svg></button>
    <button class="tool" aria-label="Layout Manager"><svg><use href="#i-manager"/></svg></button>
    <button class="tool" aria-label="Style Manager"><svg><use href="#i-style"/></svg></button>
    <div class="grip"></div>
    <button class="tool pressed" aria-label="Pan Map"><svg><use href="#i-hand"/></svg></button>
    <button class="tool" aria-label="Pan to Selection"><svg><use href="#i-pansel"/></svg></button>
    <button class="tool" aria-label="Zoom In"><svg><use href="#i-zoomin"/></svg></button>
    <button class="tool" aria-label="Zoom Out"><svg><use href="#i-zoomout"/></svg></button>
    <button class="tool" aria-label="Zoom Full"><svg><use href="#i-zoomfull"/></svg></button>
    <button class="tool" disabled aria-label="Zoom to Selection"><svg><use href="#i-zoomsel"/></svg></button>
    <button class="tool" aria-label="Zoom to Layer"><svg><use href="#i-zoomlayer"/></svg></button>
    <button class="tool" aria-label="Zoom to Native Resolution"><svg><use href="#i-zoomnative"/></svg></button>
    <button class="tool" aria-label="Zoom Last"><svg><use href="#i-zoomlast"/></svg></button>
    <button class="tool" disabled aria-label="Zoom Next"><svg><use href="#i-zoomnext"/></svg></button>
    <button class="tool" aria-label="New Map View"><svg><use href="#i-mapview"/></svg></button>
    <button class="tool" aria-label="New 3D Map View"><svg><use href="#i-3d"/></svg></button>
    <button class="tool" aria-label="New Spatial Bookmark"><svg><use href="#i-bookmarknew"/></svg></button>
    <button class="tool" aria-label="Show Spatial Bookmarks"><svg><use href="#i-bookmarks"/></svg></button>
    <button class="tool" aria-label="Temporal Controller"><svg><use href="#i-clock"/></svg></button>
    <button class="tool" aria-label="Refresh"><svg><use href="#i-refresh"/></svg></button>
    <div class="grip"></div>
    <button class="tool" disabled aria-label="Identify Features"><svg><use href="#i-identify"/></svg></button>
    <button class="tool" disabled aria-label="Open Attribute Table"><svg><use href="#i-table"/></svg></button>
    <button class="tool" disabled aria-label="Field Calculator"><svg><use href="#i-abacus"/></svg></button>
    <button class="tool" aria-label="Processing Toolbox"><svg><use href="#i-gear"/></svg></button>
    <button class="tool" aria-label="Statistical Summary"><svg><use href="#i-sum"/></svg></button>
    <button class="tool" aria-label="Measure Line"><svg><use href="#i-measure"/></svg></button>
    <button class="drop" aria-label="Measure menu"></button>
    <button class="tool" aria-label="Map Tips"><svg><use href="#i-tip"/></svg></button>
</div>

<div class="toolrow">
    <div class="grip first"></div>
    <button class="tool" aria-label="Data Source Manager"><svg><use href="#i-datasource"/></svg></button>
    <button class="tool" aria-label="New GeoPackage Layer"><svg><use href="#i-gpkgnew"/></svg></button>
    <button class="tool" aria-label="New Shapefile Layer"><svg><use href="#i-shp"/></svg></button>
    <button class="tool" aria-label="New SpatiaLite Layer"><svg><use href="#i-splnew"/></svg></button>
    <button class="tool" aria-label="New Temporary Scratch Layer"><svg><use href="#i-memnew"/></svg></button>
    <div class="sep"></div>
    <button class="tool" aria-label="New Virtual Layer"><svg><use href="#i-virtnew"/></svg></button>
    <div class="sep"></div>
    <div class="grip"></div>
    <button class="tool menu" disabled aria-label="Current Edits"><svg><use href="#i-pencils"/></svg></button>
    <button class="tool" disabled aria-label="Toggle Editing"><svg><use href="#pencil"/></svg></button>
    <button class="tool" disabled aria-label="Save Layer Edits"><svg><use href="#i-saveedit"/></svg></button>
    <button class="tool" disabled aria-label="Add Feature"><svg><use href="#i-points"/></svg></button>
    <button class="tool" disabled aria-label="Vertex Tool"><svg><use href="#i-vertex"/></svg></button>
    <button class="drop" aria-label="Vertex Tool menu"></button>
    <button class="tool" disabled aria-label="Modify Attributes"><svg><use href="#i-modify"/></svg></button>
    <button class="tool" disabled aria-label="Delete Selected"><svg><use href="#i-trash"/></svg></button>
    <button class="tool" disabled aria-label="Cut Features"><svg><use href="#i-cut"/></svg></button>
    <button class="tool" disabled aria-label="Copy Features"><svg><use href="#i-copy"/></svg></button>
    <button class="tool" disabled aria-label="Paste Features"><svg><use href="#i-paste"/></svg></button>
    <button class="tool" disabled aria-label="Undo"><svg><use href="#i-undo"/></svg></button>
    <button class="tool" disabled aria-label="Redo"><svg><use href="#i-redo"/></svg></button>
    <div class="grip"></div>
    <button class="tool" disabled aria-label="Layer Labeling"><svg><use href="#i-label"/></svg></button>
    <button class="tool" disabled aria-label="Layer Diagrams"><svg><use href="#i-diagram"/></svg></button>
    <div class="sep"></div>
    <button class="tool" aria-label="Highlight Pinned Labels"><svg><use href="#i-pin"/></svg></button>
    <button class="tool" aria-label="Unplaced Labels"><svg><use href="#i-redlabel"/></svg></button>
    <div class="sep"></div>
    <div class="more wide"></div>
    <div class="grip"></div>
    <button class="tool" aria-label="MetaSearch"><svg><use href="#i-wwwadd"/></svg></button>
    <div class="more"></div>
    <div class="grip"></div>
    <button class="tool" aria-label="Python Console"><svg><use href="#i-python"/></svg></button>
    <div class="more"></div>
    <div class="grip"></div>
    <button class="tool" aria-label="Help Contents"><svg><use href="#i-help"/></svg></button>
</div>

<div class="toolrow last">
    <div class="grip first"></div>
    <button class="tool" disabled aria-label="Circular String"><svg><use href="#i-curve"/></svg></button>
    <button class="drop" aria-label="Circular String menu"></button>
    <button class="tool" disabled aria-label="Add Circle"><svg><use href="#i-circle"/></svg></button>
    <button class="drop" aria-label="Circle menu"></button>
    <button class="tool" disabled aria-label="Add Ellipse"><svg><use href="#i-ellipse"/></svg></button>
    <button class="drop" aria-label="Ellipse menu"></button>
    <button class="tool" disabled aria-label="Add Rectangle"><svg><use href="#i-rect"/></svg></button>
    <button class="drop" aria-label="Rectangle menu"></button>
    <button class="tool" disabled aria-label="Add Regular Polygon"><svg><use href="#i-polygon"/></svg></button>
    <button class="drop" aria-label="Polygon menu"></button>
    <div class="grip"></div>
    <button class="tool" disabled aria-label="Select Features"><svg><use href="#i-select"/></svg></button>
    <button class="drop" aria-label="Select menu"></button>
    <button class="tool" disabled aria-label="Select by Value"><svg><use href="#i-selvalue"/></svg></button>
    <button class="drop" aria-label="Select by Value menu"></button>
    <button class="tool" aria-label="Deselect Features"><svg><use href="#i-deselect"/></svg></button>
    <button class="drop" aria-label="Deselect menu"></button>
    <button class="tool" aria-label="Select by Location"><svg><use href="#i-selloc"/></svg></button>
    <div class="grip"></div>
    <button class="tool" aria-label="Search"><svg><use href="#i-search"/></svg></button>
    <button class="tool" aria-label="OpenStreetMap"><svg><use href="#i-osm"/></svg></button>
    <div class="grip"></div>
    <button class="tool" aria-label="T plus"><svg><use href="#i-tplus"/></svg></button>
    <div class="grip"></div>
    <button class="tool" aria-label="GPX"><svg><use href="#i-gpx"/></svg></button>
</div>

<main class="workspace">
    <nav class="sidebar">
        <div class="grip-h"></div>
        <div class="side"><button aria-label="Add Vector Layer"><svg><use href="#i-vecadd"/></svg></button></div>
        <div class="side"><button aria-label="Add Raster Layer"><svg><use href="#i-raster"/></svg></button></div>
        <div class="side"><button aria-label="Add Mesh Layer"><svg><use href="#i-meshadd"/></svg></button></div>
        <div class="side"><button aria-label="Add Delimited Text Layer"><svg><use href="#i-comma"/></svg></button></div>
        <div class="side"><button aria-label="Add SpatiaLite Layer"><svg><use href="#i-spladd"/></svg></button></div>
        <div class="side"><button aria-label="Add Virtual Layer"><svg><use href="#i-virtadd"/></svg></button></div>
        <div class="side"><button aria-label="Add PostGIS Layer"><svg><use href="#i-pgadd"/></svg></button><button class="drop" aria-label="PostGIS menu"></button></div>
        <div class="side"><button aria-label="Add WMS Layer"><svg><use href="#i-wmsadd"/></svg></button><button class="drop" aria-label="WMS menu"></button></div>
        <div class="side"><button aria-label="Add WCS Layer"><svg><use href="#i-wcsadd"/></svg></button></div>
        <div class="side"><button aria-label="Add WFS Layer"><svg><use href="#i-wfsadd"/></svg></button><button class="drop" aria-label="WFS menu"></button></div>
        <div class="side"><button aria-label="New Vector Layer"><svg><use href="#i-shp"/></svg></button><button class="drop" aria-label="New Layer menu"></button></div>
        <div class="side center"><button aria-label="Create GPX Layer"><svg><use href="#i-gps"/></svg></button></div>
    </nav>

    <div class="dock">
        <section class="panel">
            <div class="panel-head">
                <h2>Browser</h2>
                <button aria-label="Float Browser"><svg><use href="#p-float"/></svg></button>
                <button aria-label="Close Browser"><svg><use href="#p-close"/></svg></button>
            </div>
            <div class="panel-tools">
                <button aria-label="Add Selected Layers"><svg><use href="#p-add"/></svg></button>
                <button aria-label="Refresh Browser"><svg><use href="#i-refresh"/></svg></button>
                <button aria-label="Filter Browser"><svg><use href="#p-filter"/></svg></button>
                <button aria-label="Collapse Browser"><svg><use href="#p-up"/></svg></button>
                <button class="pressed" aria-label="Properties Widget"><svg><use href="#p-info"/></svg></button>
            </div>
            <div class="tree">
                <ul class="items">
                    <li><span class="tw none"></span><svg><use href="#t-star"/></svg>Favorites</li>
                    <li><button class="tw" aria-label="Expand"></button><svg><use href="#i-bookmarks"/></svg>Spatial Bookmarks</li>
                    <li><button class="tw" aria-label="Expand"></button><svg><use href="#t-home"/></svg>Home</li>
                    <li><button class="tw" aria-label="Expand"></button><svg><use href="#t-folder"/></svg>/</li>
                    <li><button class="tw open" aria-label="Collapse"></button><svg><use href="#t-folders"/></svg>/Volumes</li>
                    <li class="child"><button class="tw" aria-label="Expand"></button><svg><use href="#t-link"/></svg>Macintosh HD</li>
                    <li><span class="tw none"></span><svg><use href="#i-gpkg"/></svg>GeoPackage</li>
                    <li><span class="tw none"></span><svg><use href="#feather"/></svg>SpatiaLite</li>
                    <li><span class="tw none"></span><svg viewBox="-1 0 38 38"><use href="#elephant" width="48" height="48"/></svg>PostGIS</li>
                    <li><button class="tw" aria-label="Expand"></button><svg><use href="#t-mssql"/></svg>MSSQL</li>
                    <li><button class="tw" aria-label="Expand"></button><svg><use href="#t-oracle"/></svg>Oracle</li>
                    <li><button class="tw" aria-label="Expand"></button><svg><use href="#t-db2"/></svg>DB2</li>
                    <li><button class="tw" aria-label="Expand"></button><svg><use href="#globe"/></svg>WMS/WMTS</li>
                    <li><span class="tw none"></span><svg><use href="#t-vtiles"/></svg>Vector Tiles</li>
                    <li><button class="tw" aria-label="Expand"></button><svg><use href="#t-xyz"/></svg>XYZ Tiles</li>
                </ul>
                <div class="vscroll">
                    <button class="up" aria-label="Scroll up"></button>
                    <div class="track"><div class="thumb"></div></div>
                    <button class="down" aria-label="Scroll down"></button>
                </div>
            </div>
        </section>

        <div class="splitter"></div>

        <section class="panel">
            <div class="panel-head">
                <h2>Layers</h2>
                <button aria-label="Float Layers"><svg><use href="#p-float"/></svg></button>
                <button aria-label="Close Layers"><svg><use href="#p-close"/></svg></button>
            </div>
            <div class="panel-tools">
                <button aria-label="Layer Styling"><svg><use href="#p-brush"/></svg></button>
                <button aria-label="Add Group"><svg><use href="#p-group"/></svg></button>
                <button aria-label="Manage Map Themes"><svg><use href="#p-eye"/></svg></button>
                <button aria-label="Filter Legend"><svg><use href="#p-filter"/></svg></button>
                <button disabled aria-label="Filter by Expression"><svg><use href="#p-expr"/></svg></button>
                <button class="drop" aria-label="Expression menu"></button>
                <button aria-label="Expand All"><svg><use href="#p-down"/></svg></button>
                <button aria-label="Collapse All"><svg><use href="#p-up"/></svg></button>
                <button aria-label="Remove Layer"><svg><use href="#p-remove"/></svg></button>
            </div>
            <div class="tree layers">
                <div class="layer">
                    <button class="tw open" aria-label="Collapse"></button>
                    <input type="checkbox" id="ofc" checked>
                    <svg><use href="#t-raster"/></svg>
                    <label for="ofc">OFC 2016 20cm - 32 bit colore - 4R 1G 2B Ni</label>
                </div>
                <div class="hscroll">
                    <button class="left" aria-label="Scroll left"></button>
                    <div class="track"><div class="thumb"></div></div>
                    <button class="right" aria-label="Scroll right"></button>
                </div>
            </div>
        </section>
    </div>
    <div class="dock-edge"></div>

    <div class="map">
        <svg viewBox="0 0 1180 1272">
            <defs>
                <clipPath id="land"><path id="coast" d="M84 112H127V78H148V62H248V70H262V78H284V112H308V127H352V143H375V160H396V176H440V190H484V205H506V212H528V238H556V255H570V272H597V262H612V257H630V262H688V272H711V288H756V305H777V277H824V305H845V291H885V266H905V257H955V230H998V208H1048V240H1068V257H1135V288H1180V293H1203V284H1226V305H1203V338H1181V370H1172V390L1185 410 1203 430V455L1225 468 1245 487H1290L1325 510 1375 528H1415V520L1440 527H1460L1478 517H1505L1520 530 1538 555 1520 568V578H1500L1480 590H1470L1445 603 1455 620 1440 640 1425 670 1400 682 1418 708 1395 725 1358 748 1378 755 1385 770 1408 775 1415 805 1430 822 1440 808 1460 825 1450 830 1468 845 1450 853 1445 835 1415 850 1395 860 1362 862V885L1340 905 1305 912 1298 945 1308 970 1330 980 1320 1020 1310 1050 1320 1085 1305 1100 1280 1108 1255 1132 1230 1145 1215 1138 1208 1145 1225 1160 1245 1180 1228 1210 1236 1240 1225 1250 1190 1270 1170 1285 1115 1303 1105 1325 1135 1345V1382H1065L1050 1415H1000L978 1412 950 1405 935 1412 905 1427H865V1410H845V1370H890V1315L865 1305 845 1280 815 1250 795 1225 770 1185 720 1168 672 1165V1157H648V1128H665L678 1100 670 1075 648 1062 620 1065V1048H576V1073H535L512 1045V1015H536L548 960V870H532V850H520V828H507V805H493V790H484V768H470V745H460V725H432V695H428V680H415V650H420V628H405V560H410V515H395V478H380V450H375V432H363V418H352V402H340V390H328V375H315V362H298V355H262V335L284 322V306H262V322H240V290H237V273H195V258H172V193H127V175H106V143H84ZM1423 483H1473V515H1423Z"/></clipPath>
                <!-- ragged edges for the colour patches -->
                <filter id="ragged" x="-10%" y="-10%" width="120%" height="120%" color-interpolation-filters="sRGB"><feTurbulence type="fractalNoise" baseFrequency="0.03" numOctaves="5" seed="3" result="n"/><feGaussianBlur in="SourceGraphic" stdDeviation="5"/><feDisplacementMap in2="n" scale="110" xChannelSelector="R" yChannelSelector="G"/></filter>
                <filter id="fields" x="0" y="0" width="100%" height="100%" color-interpolation-filters="sRGB"><feTurbulence type="fractalNoise" baseFrequency="0.05" numOctaves="6" seed="4"/><feColorMatrix values="0 0 0 0 .5  0 0 0 0 .56  0 0 0 0 .52  5 0 0 0 -2.200"/></filter>
                <filter id="plots" x="0" y="0" width="100%" height="100%" color-interpolation-filters="sRGB"><feTurbulence type="fractalNoise" baseFrequency="0.1 0.09" numOctaves="5" seed="9"/><feColorMatrix values="0 0 0 0 .52  0 0 0 0 .57  0 0 0 0 .52  6 0 0 0 -2.900"/></filter>
                <filter id="speck" x="0" y="0" width="100%" height="100%" color-interpolation-filters="sRGB"><feTurbulence type="fractalNoise" baseFrequency="0.22 0.19" numOctaves="2" seed="21"/><feColorMatrix values="0 0 0 0 .58  0 0 0 0 .64  0 0 0 0 .56  5 0 0 0 -2.700"/></filter>
                <filter id="woods" x="0" y="0" width="100%" height="100%" color-interpolation-filters="sRGB"><feTurbulence type="fractalNoise" baseFrequency="0.17 0.14" numOctaves="3" seed="11"/><feColorMatrix values="0 0 0 0 .28  0 0 0 0 .14  0 0 0 0 .22  0 5 0 0 -2.400"/></filter>
                <filter id="reds" x="0" y="0" width="100%" height="100%" color-interpolation-filters="sRGB"><feTurbulence type="fractalNoise" baseFrequency="0.05" numOctaves="6" seed="7"/><feColorMatrix values="0 0 0 0 .64  0 0 0 0 .2  0 0 0 0 .27  0 0 6 0 -3"/></filter>
            </defs>
            <g transform="translate(194 294) scale(.6288 .523)" shape-rendering="crispEdges">
                <g clip-path="url(#land)">
                    <rect x="80" y="60" width="1470" height="1380" fill="#8f4a58"/>
                    <g filter="url(#ragged)">
                        <path d="M20 0h560l700 250 60 200L820 400 450 390 250 350 40 200z" fill="#8e5064"/>
                        <path d="M380 390h760v220H400z" fill="#9a4352"/>
                        <path d="M520 350l660-30 0 60-500 10-140 0z" fill="#6b4250"/>
                        <path d="M860 400l260-10 60 70-60 80-160-50z" fill="#853143"/>
                        <path d="M740 405l80 0 150 110-50 0-170-70z" fill="#7f8a82"/>
                        <path d="M520 440h150l120 60-200 60-120-30z" fill="#986468"/>
                        <path d="M500 480l60 10 30 50-60 0z" fill="#6c2c3a"/>
                        <path d="M410 610l570-20 40 90-200 30-400-20z" fill="#85505c"/>
                        <path d="M430 640l70 0 10 70-50 30z" fill="#82202f"/>
                        <path d="M565 670l60 10 70 100-60 50-70-60z" fill="#84202f"/>
                        <path d="M740 650h70v240l-190 110-70-30 50-130 140-10z" fill="#841f2f"/>
                        <path d="M640 970h60v80l-60-20z" fill="#851a2c"/>
                        <path d="M500 680h60l0 70-40 20z" fill="#8a9c90"/>
                        <path d="M620 690l70 0 50 70-50 20z" fill="#85a092"/>
                        <path d="M490 750l50 20 30 90-30 30zM550 990h90v60h-90z" fill="#84796f"/>
                        <path d="M620 790l120-10 0 30-90 20z" fill="#85776f"/>
                        <path d="M440 380h280v30H440z" fill="#a64452"/>
                    </g>
                    <path d="M1135 480H1560V757H978V680H1020V610H1110V580H1135Z" fill="#82485f"/>
                    <g filter="url(#ragged)"><path d="M1040 600l360 20-20 100-380 10z" fill="#735866"/></g>
                    <path d="M798 710H978V757H1480V860L1340 905 1300 970H688V917H755V903H776V860H798Z" fill="#a0605a"/>
                    <path d="M1300 770h130l20 80-110 0z" fill="#a85455"/>
                    <path d="M688 970H1340V1440H840L690 1150Z" fill="#98525c"/>
                    <path d="M690 1030h420v110H700z" fill="#80596a" opacity=".5" filter="url(#ragged)"/>
                    <rect x="80" y="60" width="720" height="980" filter="url(#reds)" opacity=".5"/>
                    <rect x="800" y="200" width="740" height="1240" filter="url(#reds)" opacity=".35"/>
                    <rect x="80" y="400" width="1000" height="300" filter="url(#fields)" opacity=".5"/>
                    <rect x="690" y="970" width="700" height="470" filter="url(#plots)" opacity=".75"/>
                    <rect x="980" y="560" width="560" height="200" filter="url(#plots)" opacity=".6"/>
                    <rect x="800" y="720" width="600" height="250" filter="url(#plots)" opacity=".6"/>
                    <rect x="80" y="60" width="1470" height="640" filter="url(#woods)" opacity=".6"/>
                    <rect x="80" y="700" width="1470" height="740" filter="url(#woods)" opacity=".3"/>
                    <rect x="80" y="60" width="720" height="1000" filter="url(#speck)" opacity=".4"/>
                    <rect x="800" y="200" width="740" height="1240" filter="url(#speck)" opacity=".45"/>
                    <path d="M250 105l50 30 60 25 100 40M195 120l45 60 10 50M560 270l40 35M320 290l30 0 20 20-30 5zM370 290l40 30" stroke="#8fa598" stroke-width="8" fill="none" filter="url(#ragged)" opacity=".8"/>
                    <path d="M430 470h20v10h-20z" fill="#1c5a52"/>
                    <path d="M928 376h24v10h-24z" fill="#14284c"/>
                    <path d="M1368 618h8v20h-8z" fill="#2a5578"/>
                    <path d="M262 345L310 362 345 390 372 425 392 470 404 510 408 560 412 630 420 690 440 725 475 765 496 810 530 840 548 870 548 960 536 1015 515 1020 520 1050 545 1070 576 1060 580 1048 640 1050 678 1080 676 1110" fill="none" stroke="#0a2650" stroke-width="11"/>
                    <path d="M660 1150L720 1166 775 1185 800 1230 850 1285 890 1320 905 1370 950 1390 1040 1410" fill="none" stroke="#343f58" stroke-width="8"/>
                </g>
                <use href="#coast" fill="none" stroke="#241420" stroke-width="1.500"/>
                <g fill="#0d1226">
                    <path d="M198 728h18v20h-18zM147 980h8v-14h28v34l-14 16h-22zM316 1140h14v-8h65v-14h25v12h45v-20h12v-14h26v115h-42v-22h-22l-25-4-20 8h-50l-28-8zM284 1278h18v-18h12v12h14v22l-14 8-28-8zM418 1430h23v38h-23zM733 1285h12v10h9v12h-12zM724 1418l20-10 16 4 10 35-15 14-20-14zM846 1488h19v18h-19zM510 1095h14v10h-14zM548 1102h17v14h-17z"/>
                </g>
                <g fill="#a8505a">
                    <path d="M160 970h14l4 10-4 22-12 8-10-8 2-18zM322 1150l14-8 24 0 18 12 16-2 8-14 14 6 14-4 12 10 18-4 10-18 4-24 14-6 10 10-6 26-8 20 0 20-14 8 24 20-2 14-20 0-14-18-14-14-16-6-12 4-22-6-10 12-24 8-20-6-10-16zM732 1420l16-4 14 30-8 8-10-10z"/>
                    <path d="M850 1378l50 4 14 20-30 18-28-10z" fill="#b06566"/>
                    <path d="M290 1282l22-2 8 12-18 2zM422 1436h14v24h-14zM203 734h8v9h-8z" fill="#6d7b7a"/>
                    <path d="M552 1106h9v6h-9z" fill="#aaa"/>
                    <path d="M851 1493h10v8h-10z"/>
                </g>
            </g>
        </svg>
    </div>
</main>

<footer class="status">
    <label class="locate">
        <svg viewBox="0 0 26 26"><circle cx="10" cy="10" r="8" fill="none" stroke="#8c8c8c" stroke-width="2"/><path d="M16 16l8 8" stroke="#8c8c8c" stroke-width="2.500"/></svg>
        <input type="text" placeholder="Type to locate (⌘K)" aria-label="Locate">
    </label>
    <label class="cut" for="coord">oordinat</label>
    <input class="field coord" id="coord" type="text" value="12.780,45.153">
    <button class="plain" aria-label="Toggle Extents"><svg class="mouse" viewBox="0 0 32 34"><g transform="rotate(-28 16 17)"><rect x="9" y="2" width="14" height="30" rx="7" fill="#eee" stroke="#111" stroke-width="2"/><path d="M9 13h14M14 3v10M18 3v10" stroke="#111" stroke-width="2"/><circle cx="16" cy="23" r="3.500" fill="#fff" stroke="#111" stroke-width="2"/></g><path d="M23 6l5-4M1 20l4 5" stroke="#111" stroke-width="2" stroke-dasharray="2 2"/></svg></button>
    <label class="cut scale-label" for="scale">cal</label>
    <span class="box combo"><select id="scale"><option>1:1,931,019</option></select><i class="arrow"></i></span>
    <button class="plain lock" aria-label="Lock Scale"><svg viewBox="0 0 24 34"><path d="M5 17v-7c0-10 14-10 14 0v7" fill="none" stroke="#777" stroke-width="5"/><path d="M5 17v-7c0-10 14-10 14 0v7" fill="none" stroke="#e2e2e2" stroke-width="2.500"/><rect y="16" width="24" height="18" rx="2" fill="#666"/></svg></button>
    <label class="cut mag-label" for="magnifier">lagnifie</label>
    <span class="box"><input id="magnifier" type="text" value="100%"><span class="spin"><button class="up" aria-label="Increase magnifier"></button><button class="down" aria-label="Decrease magnifier"></button></span></span>
    <label class="cut rot-label" for="rotation">otatio</label>
    <span class="box"><input id="rotation" type="text" value="0.0 °"><span class="spin"><button class="up" aria-label="Increase rotation"></button><button class="down" aria-label="Decrease rotation"></button></span></span>
    <label class="render"><input type="checkbox" checked>Render</label>
    <button class="crs"><svg viewBox="0 0 32 32"><path d="M9 2h14l8 14H1z" fill="#888"/><path d="M2 15h28c-2 20-26 20-28 0z" fill="#ccc"/><path d="M1 15h30M5 8h22M4 23h24M11 2C6 14 8 26 12 30M21 2c5 12 3 24-1 28M16 2v28" fill="none" stroke="#555" stroke-width="1.500"/></svg>EPSG:4326</button>
</footer>

    </body>
</html>
```
FILE: styles.css
```css
*{
    box-sizing: border-box;
}
body{
    margin: 0;
    min-height: 100vh;
    display: flex;
    flex-direction: column;
    position: relative;
    overflow: hidden;
    background-color: #323232;
    color: #f2f2f2;
    font-family: Inter, "Liberation Sans", sans-serif;
    font-size: 26px;
}
/* shadow of the neighbouring window */
body::after{
    content: "";
    position: absolute;
    left: 100%;
    top: 190px;
    width: 100px;
    height: 1060px;
    box-shadow: 0 0 80px rgba(0,0,0,0.65);
    pointer-events: none;
}
button, input, select{
    font: inherit;
    color: inherit;
    background: none;
    border: 0;
    padding: 0;
    margin: 0;
    outline: 0;
}
h1, h2, ul{
    margin: 0;
    padding: 0;
}
.paints{
    position: absolute;
}
.sprite{
    display: none;
}

/* title bar */
.titlebar{
    display: flex;
    height: 51px;
    border-bottom: 1px solid #000;
    background-color: #292929;
}
.lights{
    display: flex;
    gap: 16px;
    width: 108px;
    padding: 10px 0 0 6px;
}
.lights span{
    width: 24px;
    height: 24px;
    border-radius: 50%;
    background-color: #4d4d4d;
}
h1{
    flex: 1;
    text-align: center;
    font-size: 26px;
    line-height: 42px;
    font-weight: bold;
    color: #6a6a6a;
}

/* toolbars */
.toolrow{
    display: flex;
    align-items: center;
    flex: none;
    height: 78px;
    padding-bottom: 3px;
    overflow: hidden;
    border-bottom: 1px solid #7b7b7b;
    box-shadow: inset 0 -3px #2a2a2a;
}
.toolrow.last{
    height: 76px;
    padding-bottom: 0;
    border-bottom: 2px solid #7b7b7b;
    box-shadow: 0 3px #262626;
    margin-bottom: 3px;
}
.tool{
    flex: none;
    display: flex;
    justify-content: center;
    align-items: center;
    width: 66px;
    height: 62px;
}
.tool svg, .side svg{
    display: block;
    width: 48px;
    height: 48px;
}
.tool:disabled svg, .panel-tools button:disabled svg{
    opacity: 0.3;
    filter: grayscale(0.5);
}
.tool.pressed{
    width: 62px;
    height: 60px;
    margin: 0 2px;
}
.pressed{
    border: 2px solid #565656;
    border-radius: 5px;
    background-color: #2b2b2b;
    box-shadow: 0 0 0 1px #202020;
}
.tool.menu{
    position: relative;
}
.tool.menu::after{
    content: "";
    position: absolute;
    right: 7px;
    bottom: 5px;
    border: 6px solid transparent;
    border-top-color: #b5b5b5;
    border-bottom: 0;
}
.drop{
    flex: none;
    width: 24px;
    height: 40px;
    display: flex;
    align-items: center;
    justify-content: center;
}
.drop::before{
    content: "";
    border: 8px solid transparent;
    border-top-color: #b8b8b8;
    border-bottom: 0;
}
.grip{
    flex: none;
    width: 10px;
    height: 34px;
    margin: 0 5px 0 17px;
}
.grip, .grip-h, .splitter::before, .dock-edge::before{
    background: repeating-linear-gradient(transparent 0 4px, #323232 4px 6px), repeating-linear-gradient(90deg, #7c7c7c 0 4px, #323232 4px 6px);
}
.grip.first{
    margin: 0 5px 0 0;
}
.sep{
    flex: none;
    width: 14px;
    height: 38px;
    background: linear-gradient(#2a2a2a, #2a2a2a) center / 2px 100% no-repeat;
}
.more{
    flex: none;
    width: 26px;
}
.more.wide{
    width: 44px;
}

/* text inside icons */
.t-a{ font: bold 25px "Open Sans", sans-serif; fill: #444; stroke: #ddd; stroke-width: 1.5px; }
.t-11{ font: 600 18px Inter, sans-serif; fill: #222; }
.t-i{ font: italic bold 28px "Liberation Serif", serif; fill: #ddd; }
.t-info{ font: italic bold 22px "Liberation Serif", serif; fill: #fff; }
.t-abc{ font: bold 16px "Liberation Sans", sans-serif; fill: #222; }
.t-red{ font: bold 16px "Liberation Sans", sans-serif; fill: #e00; }
.t-q{ font: 34px "Liberation Serif", serif; fill: #fff; }
.t-gpx{ font: 13px "Liberation Sans", sans-serif; fill: #0a0a0a; }
.t-db2{ font: 13px "DejaVu Sans", sans-serif; fill: #fff; }

/* main area */
.workspace{
    flex: 1;
    display: grid;
    grid-template-columns: 92px 698px 16px 1fr;
    min-height: 0;
}
.sidebar{
    border-right: 2px solid #282828;
    padding-top: 8px;
}
.grip-h{
    width: 34px;
    height: 10px;
    margin: 0 0 4px 28px;
}
.side{
    display: flex;
    align-items: center;
    height: 64px;
    padding-left: 6px;
    gap: 8px;
}
.side.center{
    padding-left: 18px;
}
.dock{
    display: flex;
    flex-direction: column;
    padding-left: 2px;
    min-height: 0;
    min-width: 0;
}
.panel{
    flex: 1 1 0;
    min-height: 0;
    display: flex;
    flex-direction: column;
}
.panel-head{
    display: flex;
    align-items: center;
    gap: 6px;
    height: 36px;
    padding: 0 2px 0 8px;
}
.panel-head h2{
    flex: 1;
    font-size: 22px;
    font-weight: normal;
    color: #dedede;
}
.panel-head svg{
    display: block;
    width: 22px;
    height: 22px;
}
.panel-tools{
    display: flex;
    align-items: center;
    gap: 4px;
    height: 62px;
    padding-left: 9px;
}
.panel-tools button{
    display: flex;
    align-items: center;
    justify-content: center;
    width: 46px;
    height: 44px;
}
.panel-tools button.drop{
    width: 20px;
}
.panel-tools svg{
    width: 32px;
    height: 32px;
}
.tree{
    flex: 1;
    min-height: 0;
    display: flex;
    overflow: hidden;
    border: 2px solid #282828;
    border-right: 0;
    border-bottom-width: 1px;
    background-color: #1e1e1e;
}
.tree.layers{
    flex-direction: column;
    justify-content: space-between;
}
.items{
    flex: 1;
    list-style: none;
    font-size: 26px;
}
.items li{
    display: flex;
    align-items: center;
    height: 36px;
    padding-left: 12px;
    white-space: pre;
}
.items li.child{
    padding-left: 52px;
}
.items svg{
    width: 32px;
    height: 32px;
    margin: 0 12px 0 18px;
}
.tw{
    flex: none;
    width: 16px;
    height: 16px;
    display: flex;
    align-items: center;
    justify-content: center;
}
.tw::before{
    content: "";
    border: 8px solid transparent;
    border-left-color: #b0b0b0;
    border-right: 0;
}
.tw.open::before{
    border: 8px solid transparent;
    border-top-color: #b0b0b0;
    border-bottom: 0;
}
.tw.none::before{
    border: 0;
}
.layer{
    display: flex;
    align-items: center;
    height: 37px;
    padding-left: 12px;
    background-color: #454545;
}
.layer svg{
    flex: none;
    width: 32px;
    height: 32px;
    margin: 0 12px;
}
.layer label{
    flex: 1;
    line-height: 31px;
    white-space: nowrap;
    font-weight: bold;
    color: #fff;
    border-bottom: 3px solid #fff;
}
input[type="checkbox"]{
    flex: none;
    appearance: none;
    width: 28px;
    height: 28px;
    display: grid;
    place-items: center;
    border: 1px solid #161616;
    background-color: #1c1c1c;
}
input[type="checkbox"]:checked::before{
    content: "";
    width: 8px;
    height: 15px;
    margin-bottom: 4px;
    border: solid #d8d8d8;
    border-width: 0 3px 3px 0;
    transform: rotate(40deg);
}
.layer input{
    margin-left: 18px;
}

/* scroll bars */
.vscroll{
    width: 28px;
    display: flex;
    flex-direction: column;
    background-color: #383838;
}
.hscroll{
    height: 26px;
    display: flex;
    background-color: #383838;
}
.track{
    flex: 1;
}
.vscroll .thumb{
    height: 66%;
    margin-top: 2px;
}
.hscroll .thumb{
    width: 52%;
    height: 26px;
    margin-left: 2px;
}
.thumb, .vscroll button, .hscroll button{
    border: 2px solid #565656;
    background-color: #404040;
}
.vscroll button, .hscroll button{
    width: 28px;
    height: 26px;
    display: flex;
    align-items: center;
    justify-content: center;
}
.hscroll button{
    width: 26px;
}
.up::before, .down::before, .left::before, .right::before{
    content: "";
    border: 8px solid transparent;
}
.up::before{
    border-bottom-color: #bdbdbd;
    border-top: 0;
}
.down::before{
    border-top-color: #bdbdbd;
    border-bottom: 0;
}
.left::before{
    border-right-color: #bdbdbd;
    border-left: 0;
}
.right::before{
    border-left-color: #bdbdbd;
    border-right: 0;
}
.splitter{
    height: 14px;
    padding: 5px 0 0 10px;
}
.splitter::before{
    content: "";
    display: block;
    width: 34px;
    height: 4px;
    margin: 0 auto;
}
.dock-edge{
    display: flex;
    align-items: center;
    justify-content: center;
    border-right: 1px solid #262626;
}
.dock-edge::before{
    content: "";
    width: 4px;
    height: 34px;
    margin-left: 6px;
}
.map{
    background-color: #fff;
    min-height: 0;
    overflow: hidden;
}
.map svg{
    display: block;
    width: 100%;
    height: 100%;
}

/* status bar */
.status{
    display: flex;
    align-items: center;
    flex: none;
    height: 54px;
    padding-top: 10px;
    font-size: 22px;
    color: #f2f2f2;
}
.status > *{
    flex: none;
}
.locate{
    display: flex;
    align-items: center;
    gap: 15px;
    align-self: stretch;
    width: 425px;
    margin-right: 54px;
    padding: 0 0 0 15px;
    border-radius: 4px;
    background-color: #1e1e1e;
}
.locate svg{
    width: 26px;
    height: 26px;
}
.locate input{
    flex: 1;
    min-width: 0;
    font-size: 26px;
}
.locate input::placeholder{
    color: #8c8c8c;
    opacity: 1;
}
.cut{
    width: 84px;
    margin-right: 6px;
    overflow: hidden;
    white-space: nowrap;
}
.field, .box{
    height: 44px;
    border: 1px solid #262626;
    border-radius: 4px;
    background-color: #1e1e1e;
    font-size: 23px;
}
.coord{
    width: 183px;
    padding-left: 12px;
}
.plain{
    width: 34px;
    margin: 0 22px 0 8px;
}
.plain svg{
    display: block;
    height: 34px;
}
.mouse{
    width: 34px;
}
.scale-label{
    width: 28px;
}
.box{
    display: flex;
    align-items: center;
    width: 182px;
    overflow: hidden;
}
.box input{
    flex: 1;
    min-width: 0;
    padding-left: 9px;
}
.combo{
    width: 202px;
}
.combo select{
    flex: 1;
    appearance: none;
    padding-left: 6px;
}
.arrow{
    width: 40px;
    height: 42px;
    display: flex;
    align-items: center;
    justify-content: center;
    border: 2px solid #565656;
    border-left: 0;
    border-radius: 0 4px 4px 0;
    background-color: #424242;
}
.arrow::before{
    content: "";
    border: 8px solid transparent;
    border-top-color: #1a1a1a;
    border-bottom: 0;
}
.lock{
    width: 24px;
    margin: 0 16px 0 25px;
}
.mag-label{
    width: 70px;
}
.rot-label{
    width: 56px;
    margin: 0 18px 0 20px;
}
.spin{
    width: 28px;
    height: 42px;
    display: flex;
    flex-direction: column;
    align-items: center;
    justify-content: center;
    gap: 10px;
    border: 2px solid #565656;
    border-left: 0;
    border-radius: 0 4px 4px 0;
    background-color: #424242;
}
.spin button{
    display: block;
    height: 8px;
}
.spin button::before{
    display: block;
}
.render{
    display: flex;
    align-items: center;
    gap: 9px;
    margin: 0 31px 0 16px;
    color: #dcdcdc;
}
.crs{
    display: flex;
    align-items: center;
    gap: 4px;
    color: #dcdcdc;
}
.crs svg{
    width: 32px;
    height: 32px;
}
```
